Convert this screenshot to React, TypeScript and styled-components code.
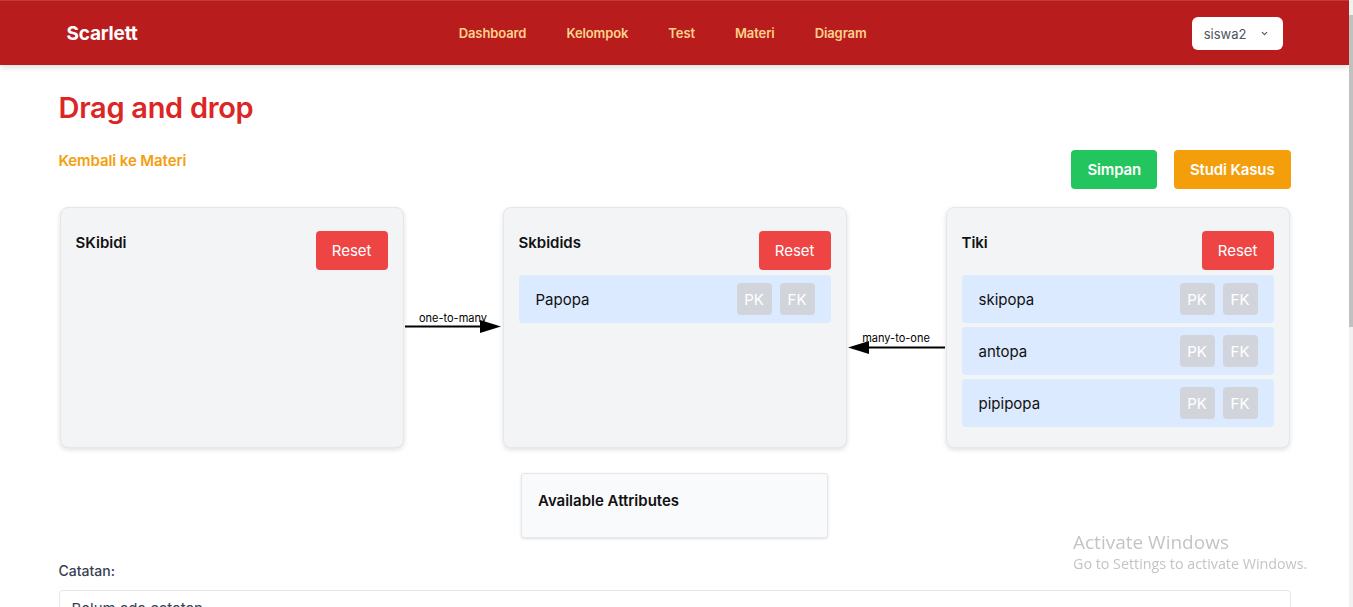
import React from "react";
import styled, { createGlobalStyle } from "styled-components";

const Global = createGlobalStyle`
  html, body { margin: 0; padding: 0; overflow: hidden; background: #fff; }
  body { font-family: Inter, "Noto Sans", sans-serif; color: #111827; }
  * { box-sizing: border-box; }
`;

const Shell = styled.div`
  display: flex;
  width: 1353px;
  height: 607px;
  overflow: hidden;
`;

const Page = styled.div`
  flex: 1;
  min-width: 0;
  display: flex;
  flex-direction: column;
`;

const ScrollTrack = styled.div`
  width: 4px;
  background: #f1f1f1;
  padding-top: 15px;
`;

const ScrollThumb = styled.div`
  height: 312px;
  background: #c1c1c1;
`;

const NavBar = styled.nav`
  height: 65px;
  background: #b91c1c;
  border-top: 1px solid #c43a3a;
  box-shadow: 0 2px 6px rgba(0, 0, 0, 0.15);
  flex-shrink: 0;
`;

const NavInner = styled.div`
  max-width: 1280px;
  margin: 0 auto;
  padding: 0 32px;
  height: 100%;
  display: flex;
  justify-content: space-between;
  align-items: center;
`;

const Brand = styled.div`
  color: #fff;
  font-weight: 700;
  font-size: 19px;
  letter-spacing: -0.2px;
`;

const NavLinks = styled.div`
  display: flex;
  gap: 40px;
  margin-right: 4px;
`;

const NavLink = styled.a`
  color: #fdd28c;
  font-size: 13px;
  font-weight: 600;
  text-decoration: none;
  letter-spacing: -0.1px;
`;

const UserButton = styled.button`
  display: flex;
  align-items: center;
  gap: 13px;
  height: 33px;
  margin-top: 1px;
  padding: 0 14px 0 12px;
  background: #fff;
  border: none;
  border-radius: 6px;
  color: #4b5563;
  font-family: inherit;
  font-size: 13px;
`;

const Container = styled.main`
  width: 100%;
  max-width: 1280px;
  margin: 0 auto;
  padding: 25px 24px 0;
`;

const Title = styled.h1`
  margin: 0 0 24px;
  font-size: 29px;
  line-height: 36px;
  font-weight: 600;
  color: #dc2626;
  letter-spacing: -0.3px;
`;

const ActionRow = styled.div`
  display: flex;
  justify-content: space-between;
  align-items: flex-start;
  margin-bottom: 18px;
`;

const BackLink = styled.a`
  color: #f59e0b;
  font-size: 15px;
  font-weight: 600;
  line-height: 20px;
  margin-top: 1px;
  letter-spacing: -0.1px;
  text-decoration: none;
`;

const ButtonGroup = styled.div`
  display: flex;
  gap: 17px;
`;

const ActionButton = styled.button<{ $bg: string }>`
  height: 39px;
  padding: 0 16px;
  border: none;
  border-radius: 4px;
  background: ${(p) => p.$bg};
  color: #fff;
  font-family: inherit;
  font-size: 15px;
  font-weight: 600;
  letter-spacing: -0.15px;
`;

const Diagram = styled.div`
  position: relative;
  display: flex;
  justify-content: space-between;
  padding: 0 1px;
`;

const Card = styled.section`
  width: 344px;
  height: 241px;
  background: #f3f4f6;
  border: 1px solid #e5e7eb;
  border-radius: 8px;
  box-shadow: 0 2px 5px rgba(0, 0, 0, 0.12);
  padding: 23px 15px 16px;
  display: flex;
  flex-direction: column;
  gap: 4px;
`;

const CardHeader = styled.div`
  display: flex;
  justify-content: space-between;
  align-items: flex-start;
  margin-bottom: 1px;
`;

const CardTitle = styled.h3`
  margin: 1px 0 0;
  font-size: 15px;
  font-weight: 600;
  line-height: 22px;
  color: #111;
`;

const ResetButton = styled.button`
  height: 39px;
  padding: 0 16px;
  border: none;
  border-radius: 4px;
  background: #ef4444;
  color: #fff;
  font-family: inherit;
  font-size: 15px;
`;

const AttrRow = styled.div`
  height: 48px;
  background: #dbeafe;
  border-radius: 4px;
  padding: 0 16px 0 17px;
  display: flex;
  align-items: center;
  justify-content: space-between;
  font-size: 15px;
  color: #111;
`;

const Badges = styled.div`
  display: flex;
  gap: 8px;
`;

const Badge = styled.span`
  width: 35px;
  height: 32px;
  border-radius: 4px;
  background: #d1d5db;
  color: #fff;
  font-size: 15px;
  display: flex;
  align-items: center;
  justify-content: center;
`;

const Connectors = styled.svg`
  position: absolute;
  left: 0;
  top: 0;
  width: 100%;
  height: 100%;
  overflow: visible;
  pointer-events: none;
  font-family: Inter, "Noto Sans", sans-serif;
`;

const AvailableCard = styled.section`
  width: 307px;
  height: 65px;
  margin: 25px auto 0;
  background: #f9fafb;
  border: 1px solid #e5e7eb;
  border-radius: 3px;
  box-shadow: 0 1px 3px rgba(0, 0, 0, 0.12);
  padding: 17px 16px;
`;

const AvailableTitle = styled.h3`
  margin: 0;
  font-size: 15px;
  font-weight: 600;
  line-height: 20px;
  color: #111;
`;

const NoteLabel = styled.label`
  display: block;
  margin-top: 23px;
  font-size: 14px;
  font-weight: 500;
  line-height: 20px;
  color: #374151;
`;

const NoteBox = styled.div`
  margin-top: 9px;
  border: 1px solid #e5e7eb;
  border-radius: 4px;
  padding: 7px 12px;
  font-size: 15px;
  line-height: 22px;
  color: #374151;
  height: 60px;
`;

const Watermark = styled.div`
  position: fixed;
  left: 1073px;
  top: 530px;
  color: #c4c4c4;
  font-family: "Open Sans", "Noto Sans", sans-serif;
  pointer-events: none;
`;

const WmTitle = styled.div`
  font-size: 19px;
  line-height: 24px;
`;

const WmSub = styled.div`
  font-size: 14.3px;
  line-height: 20px;
`;

const Chevron = () => (
  <svg width="9" height="9" viewBox="0 0 24 24" fill="none" stroke="#4b5563" strokeWidth="3" strokeLinecap="round" strokeLinejoin="round">
    <path d="M6 9l6 6 6-6" />
  </svg>
);

type Entity = { name: string; attrs: string[] };

const entities: Entity[] = [
  { name: "SKibidi", attrs: [] },
  { name: "Skbidids", attrs: ["Papopa"] },
  { name: "Tiki", attrs: ["skipopa", "antopa", "pipipopa"] },
];

export default function App() {
  return (
    <>
      <Global />
      <Shell>
        <Page>
          <NavBar>
            <NavInner>
              <Brand>Scarlett</Brand>
              <NavLinks>
                {["Dashboard", "Kelompok", "Test", "Materi", "Diagram"].map((l) => (
                  <NavLink key={l}>{l}</NavLink>
                ))}
              </NavLinks>
              <UserButton>
                siswa2 <Chevron />
              </UserButton>
            </NavInner>
          </NavBar>
          <Container>
            <Title>Drag and drop</Title>
            <ActionRow>
              <BackLink>Kembali ke Materi</BackLink>
              <ButtonGroup>
                <ActionButton $bg="#22c55e">Simpan</ActionButton>
                <ActionButton $bg="#f59e0b">Studi Kasus</ActionButton>
              </ButtonGroup>
            </ActionRow>
            <Diagram>
              {entities.map((e) => (
                <Card key={e.name}>
                  <CardHeader>
                    <CardTitle>{e.name}</CardTitle>
                    <ResetButton>Reset</ResetButton>
                  </CardHeader>
                  {e.attrs.map((a) => (
                    <AttrRow key={a}>
                      <span>{a}</span>
                      <Badges>
                        <Badge>PK</Badge>
                        <Badge>FK</Badge>
                      </Badges>
                    </AttrRow>
                  ))}
                </Card>
              ))}
              <Connectors>
                <line x1="346" y1="119.5" x2="424" y2="119.5" stroke="#000" strokeWidth="2" />
                <polygon points="421,113 442,119.5 421,126" fill="#000" />
                <text x="394" y="115" fontSize="11" textAnchor="middle" fill="#000">one-to-many</text>
                <line x1="886" y1="140.5" x2="806" y2="140.5" stroke="#000" strokeWidth="2" />
                <polygon points="810,134 789,140.5 810,147" fill="#000" />
                <text x="837" y="135" fontSize="11" textAnchor="middle" fill="#000">many-to-one</text>
              </Connectors>
            </Diagram>
            <AvailableCard>
              <AvailableTitle>Available Attributes</AvailableTitle>
            </AvailableCard>
            <NoteLabel>Catatan:</NoteLabel>
            <NoteBox>Belum ada catatan</NoteBox>
          </Container>
        </Page>
        <ScrollTrack>
          <ScrollThumb />
        </ScrollTrack>
      </Shell>
      <Watermark>
        <WmTitle>Activate Windows</WmTitle>
        <WmSub>Go to Settings to activate Windows.</WmSub>
      </Watermark>
    </>
  );
}
